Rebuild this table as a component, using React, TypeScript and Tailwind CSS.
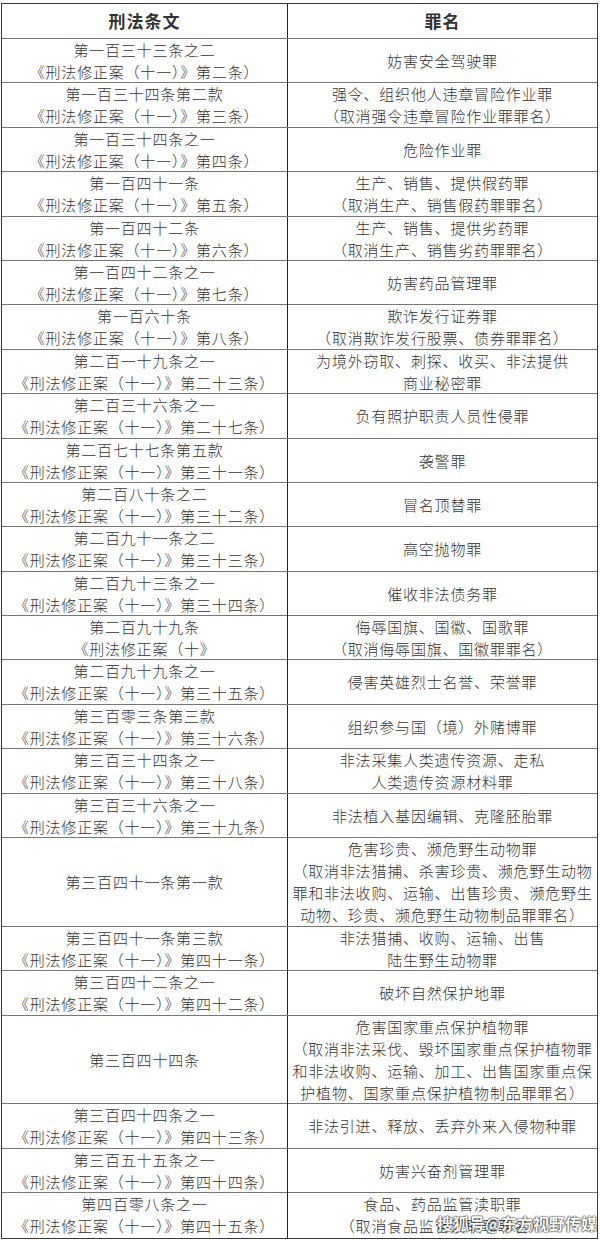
import React from 'react';

type Row = { left: string[]; right: string[]; tall?: boolean };

const rows: Row[] = [
  { left: ['第一百三十三条之二', '《刑法修正案（十一）》第二条）'], right: ['妨害安全驾驶罪'] },
  { left: ['第一百三十四条第二款', '《刑法修正案（十一）》第三条）'], right: ['强令、组织他人违章冒险作业罪', '（取消强令违章冒险作业罪罪名）'] },
  { left: ['第一百三十四条之一', '《刑法修正案（十一）》第四条）'], right: ['危险作业罪'] },
  { left: ['第一百四十一条', '《刑法修正案（十一）》第五条）'], right: ['生产、销售、提供假药罪', '（取消生产、销售假药罪罪名）'] },
  { left: ['第一百四十二条', '《刑法修正案（十一）》第六条）'], right: ['生产、销售、提供劣药罪', '（取消生产、销售劣药罪罪名）'] },
  { left: ['第一百四十二条之一', '《刑法修正案（十一）》第七条）'], right: ['妨害药品管理罪'] },
  { left: ['第一百六十条', '《刑法修正案（十一）》第八条）'], right: ['欺诈发行证券罪', '（取消欺诈发行股票、债券罪罪名）'] },
  { left: ['第二百一十九条之一', '《刑法修正案（十一）》第二十三条）'], right: ['为境外窃取、刺探、收买、非法提供', '商业秘密罪'] },
  { left: ['第二百三十六条之一', '《刑法修正案（十一）》第二十七条）'], right: ['负有照护职责人员性侵罪'] },
  { left: ['第二百七十七条第五款', '《刑法修正案（十一）》第三十一条）'], right: ['袭警罪'] },
  { left: ['第二百八十条之二', '《刑法修正案（十一）》第三十二条）'], right: ['冒名顶替罪'] },
  { left: ['第二百九十一条之二', '《刑法修正案（十一）》第三十三条）'], right: ['高空抛物罪'] },
  { left: ['第二百九十三条之一', '《刑法修正案（十一）》第三十四条）'], right: ['催收非法债务罪'] },
  { left: ['第二百九十九条', '《刑法修正案（十》'], right: ['侮辱国旗、国徽、国歌罪', '（取消侮辱国旗、国徽罪罪名）'] },
  { left: ['第二百九十九条之一', '《刑法修正案（十一）》第三十五条）'], right: ['侵害英雄烈士名誉、荣誉罪'] },
  { left: ['第三百零三条第三款', '《刑法修正案（十一）》第三十六条）'], right: ['组织参与国（境）外赌博罪'] },
  { left: ['第三百三十四条之一', '《刑法修正案（十一）》第三十八条）'], right: ['非法采集人类遗传资源、走私', '人类遗传资源材料罪'] },
  { left: ['第三百三十六条之一', '《刑法修正案（十一）》第三十九条）'], right: ['非法植入基因编辑、克隆胚胎罪'] },
  {
    left: ['第三百四十一条第一款'],
    right: [
      '危害珍贵、濒危野生动物罪',
      '（取消非法猎捕、杀害珍贵、濒危野生动物',
      '罪和非法收购、运输、出售珍贵、濒危野生',
      '动物、珍贵、濒危野生动物制品罪罪名）',
    ],
    tall: true,
  },
  { left: ['第三百四十一条第三款', '《刑法修正案（十一）》第四十一条）'], right: ['非法猎捕、收购、运输、出售', '陆生野生动物罪'] },
  { left: ['第三百四十二条之一', '《刑法修正案（十一）》第四十二条）'], right: ['破坏自然保护地罪'] },
  {
    left: ['第三百四十四条'],
    right: [
      '危害国家重点保护植物罪',
      '（取消非法采伐、毁坏国家重点保护植物罪',
      '和非法收购、运输、加工、出售国家重点保',
      '护植物、国家重点保护植物制品罪罪名）',
    ],
    tall: true,
  },
  { left: ['第三百四十四条之一', '《刑法修正案（十一）》第四十三条）'], right: ['非法引进、释放、丢弃外来入侵物种罪'] },
  { left: ['第三百五十五条之一', '《刑法修正案（十一）》第四十四条）'], right: ['妨害兴奋剂管理罪'] },
  { left: ['第四百零八条之一', '《刑法修正案（十一）》第四十五条）'], right: ['食品、药品监管渎职罪', '（取消食品监管渎职罪罪名）'] },
];

function Cell({ lines, className }: { lines: string[]; className?: string }) {
  return (
    <div className={`flex flex-col items-center justify-center text-center whitespace-nowrap ${className ?? ''}`}>
      {lines.map((l, i) => (
        <span key={i}>{l}</span>
      ))}
    </div>
  );
}

export default function App() {
  return (
    <div className="w-[600px] h-[1240px] bg-white pt-[3px] pl-[1px] font-['Noto_Sans_CJK_SC',sans-serif] text-[#333]">
      <div className="relative w-[597px] border border-[#3a3a3a]">
        <div className="grid grid-cols-[286px_1fr] h-[35px] border-b border-[#777] text-[17px] font-bold text-[#333]">
          <div className="flex items-center justify-center border-r border-[#222] tracking-[1px]">刑法条文</div>
          <div className="flex items-center justify-center tracking-[1px]">罪名</div>
        </div>
        {rows.map((r, i) => (
          <div
            key={i}
            className={`grid grid-cols-[286px_1fr] text-[15px] leading-[22px] tracking-[0.8px] font-light ${
              r.tall ? 'h-[88.8px]' : 'h-[44.4px]'
            } ${i < rows.length - 1 ? 'border-b border-[#777]' : ''}`}
          >
            <Cell lines={r.left} className="border-r border-[#222]" />
            <Cell lines={r.right} />
          </div>
        ))}
        {/* 搜狐水印 */}
        <div className="absolute right-[0px] bottom-[3px] text-[16px] font-bold text-white [text-shadow:0_0_2px_#000,0_0_1px_#000]">
          搜狐号@东方视野传媒
        </div>
      </div>
    </div>
  );
}
